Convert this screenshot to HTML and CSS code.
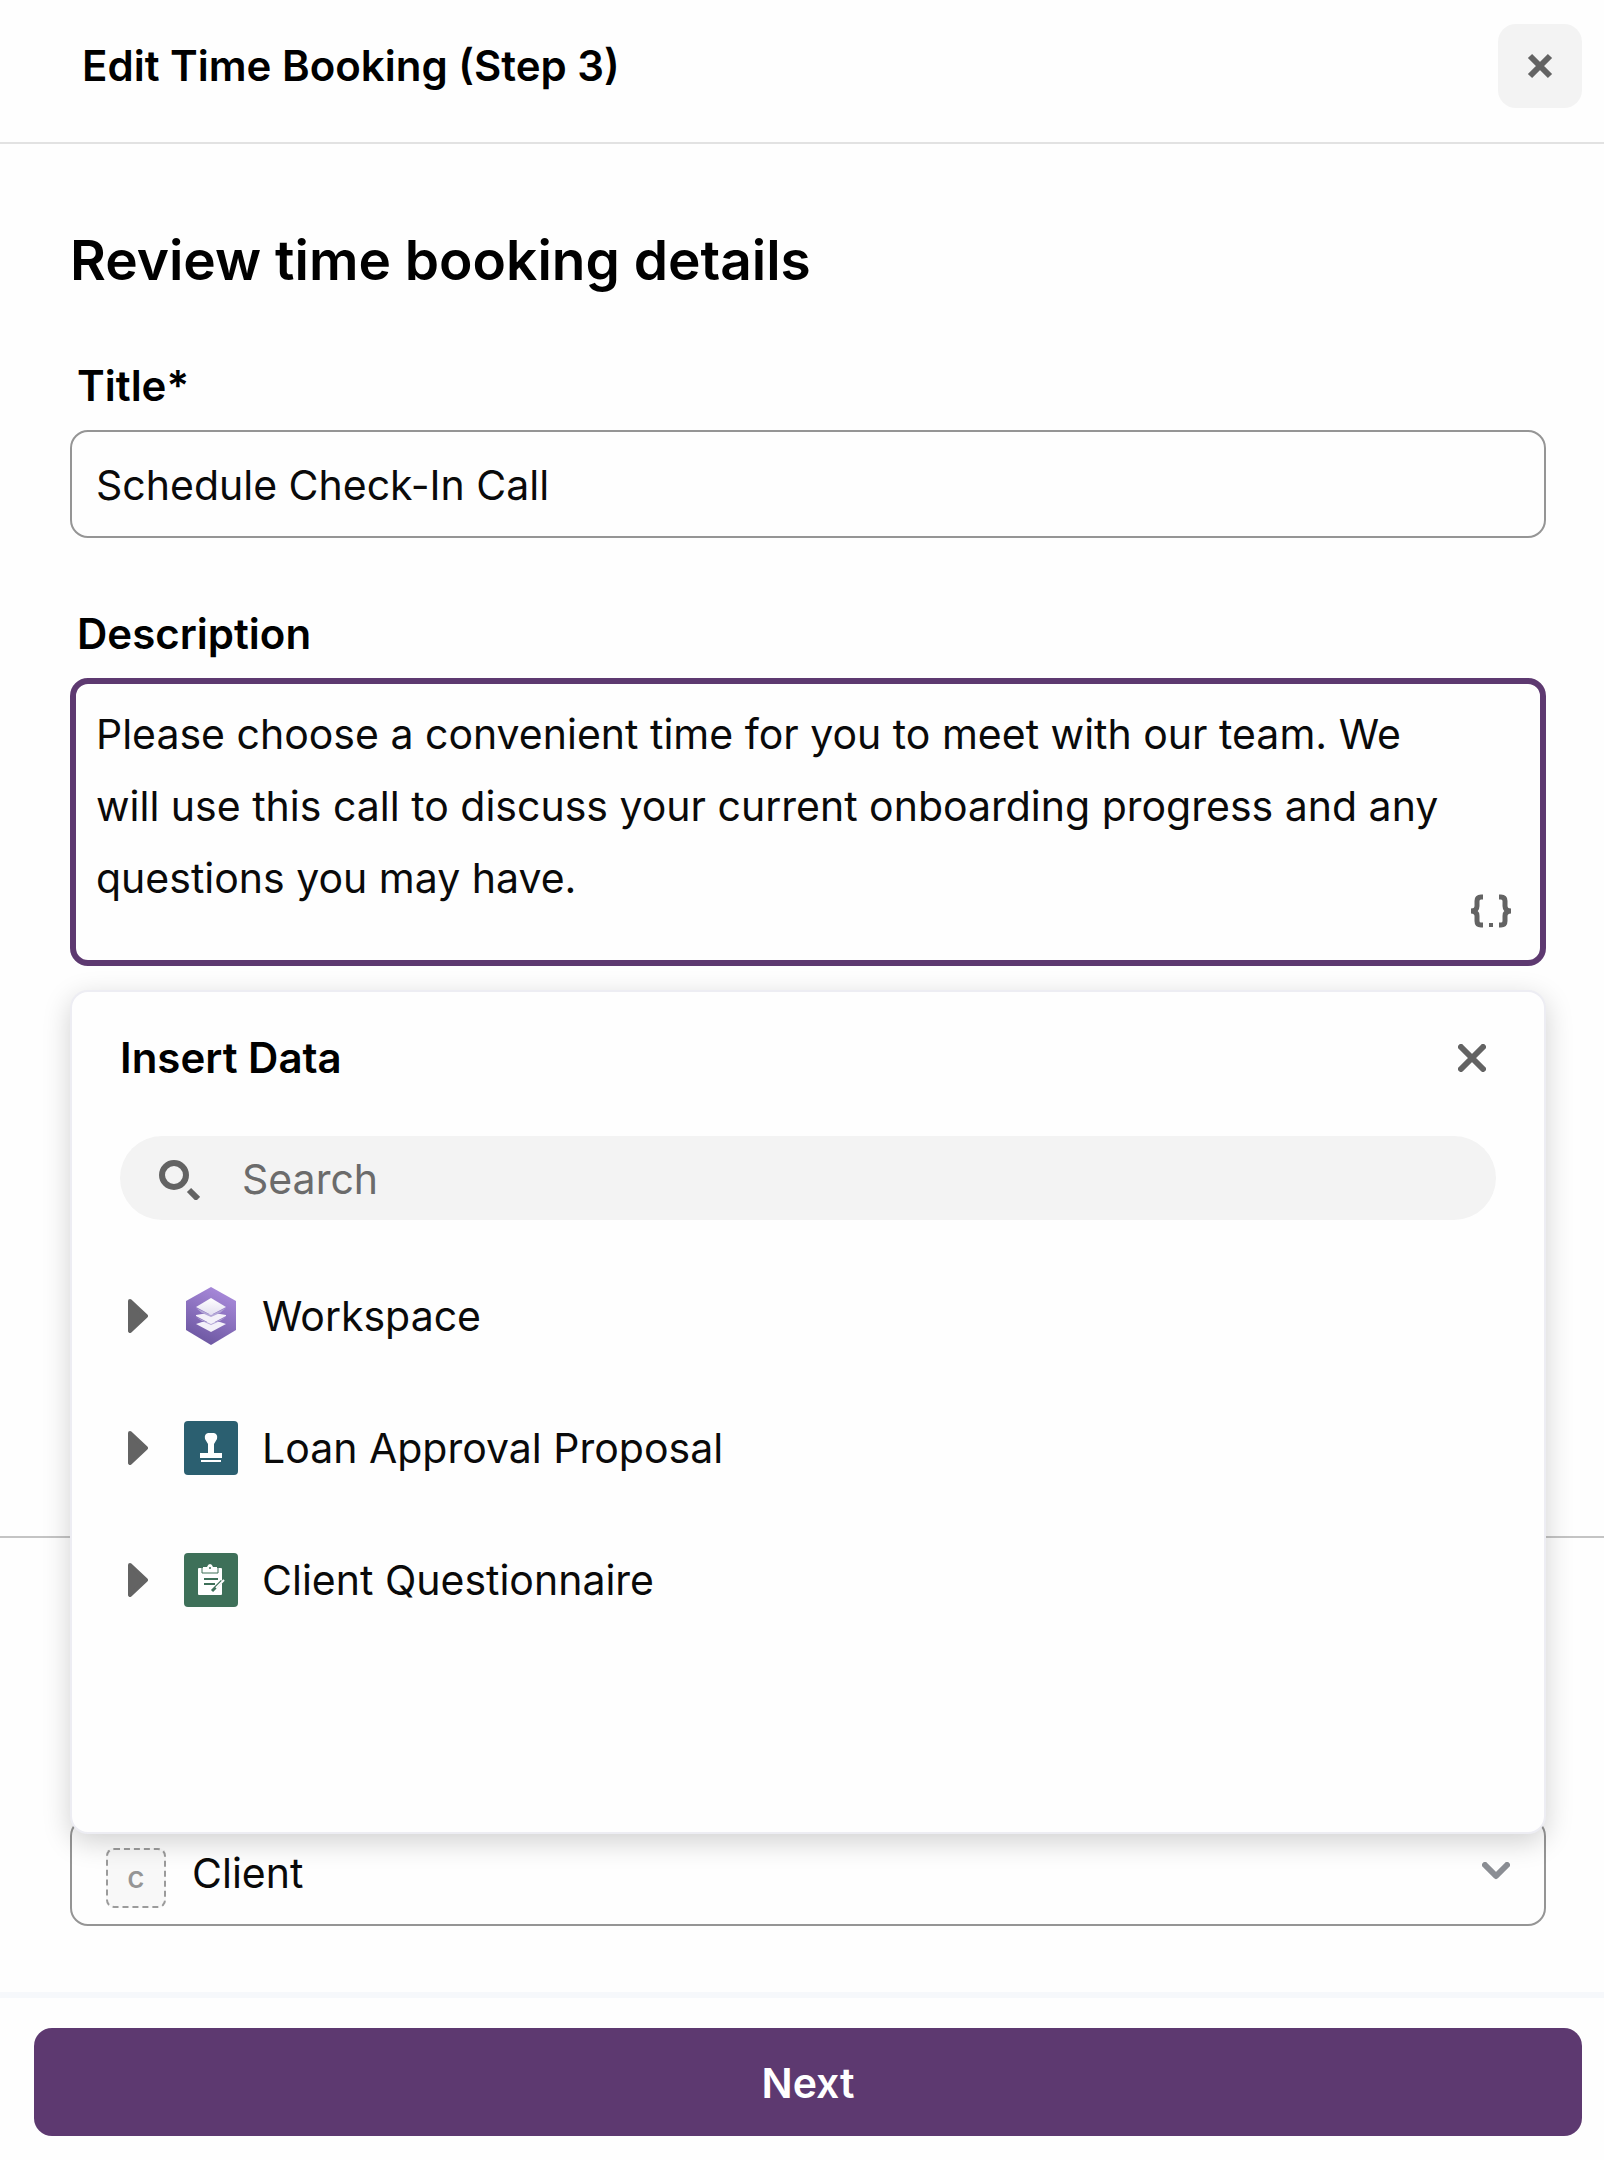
FILE: index.html
```html
<!DOCTYPE html>
<html lang="en">
<head>
<meta charset="utf-8">
<meta name="viewport" content="width=device-width, initial-scale=1">
<title>Edit Time Booking</title>
<link rel="stylesheet" href="styles.css">
</head>
<body>

  <header class="panel-header">
    <h1>Edit Time Booking (Step 3)</h1>
    <button type="button" class="close-btn" aria-label="Close">
      <svg width="26" height="26" viewBox="0 0 26 26"><path d="M3 3L23 23M23 3L3 23" stroke="#636363" stroke-width="6" fill="none"/></svg>
    </button>
  </header>

  <main>
    <section class="details">
      <h2>Review time booking details</h2>

      <div class="field">
        <label for="title">Title*</label>
        <input type="text" id="title" class="text-input" value="Schedule Check-In Call">
      </div>

      <div class="field">
        <label for="description">Description</label>
        <div class="textarea-wrap">
          <textarea id="description" rows="3">Please choose a convenient time for you to meet with our team. We will use this call to discuss your current onboarding progress and any questions you may have.</textarea>
          <button type="button" class="insert-btn" aria-label="Insert data">
            <svg width="42" height="34" viewBox="0 0 42 34" fill="none" stroke="#636363" stroke-width="4">
              <path d="M13 3H11Q7 3 7 7V12Q7 17 1 17Q7 17 7 22V27Q7 31 11 31H13" stroke-width="5"/>
              <path d="M29 3H31Q35 3 35 7V12Q35 17 41 17Q35 17 35 22V27Q35 31 31 31H29" stroke-width="5"/>
              <path d="M19 31H23"/>
            </svg>
          </button>

          <!-- Insert data menu, opens over the form -->
          <div class="popover">
            <div class="popover-header">
              <h3>Insert Data</h3>
              <button type="button" class="icon-btn" aria-label="Close insert data">
                <svg width="28" height="28" viewBox="0 0 28 28"><path d="M3 3L25 25M25 3L3 25" stroke="#636363" stroke-width="6" stroke-linecap="round" fill="none"/></svg>
              </button>
            </div>

            <div class="search">
              <svg width="42" height="42" viewBox="0 0 42 42" fill="none" stroke="#636363">
                <circle cx="16" cy="17" r="12" stroke-width="6"/>
                <path d="M31 32L40 41" stroke-width="6"/>
              </svg>
              <input type="search" placeholder="Search" aria-label="Search">
            </div>

            <ul class="sources">
              <li>
                <button type="button">
                  <svg class="arrow" viewBox="0 0 20 34"><path d="M2 2L18 17L2 32Z" fill="#636363" stroke="#636363" stroke-width="4" stroke-linejoin="round"/></svg>
                  <svg class="source-icon" viewBox="0 0 54 60">
                    <defs>
                      <linearGradient id="hex" x1="0.7" y1="0" x2="0.3" y2="1">
                        <stop offset="0" stop-color="#aa8bdc"/>
                        <stop offset="1" stop-color="#6a559f"/>
                      </linearGradient>
                      <linearGradient id="sheet" x1="0" y1="0" x2="0" y2="1">
                        <stop offset="0" stop-color="#ffffff"/>
                        <stop offset="1" stop-color="#e2def0"/>
                      </linearGradient>
                    </defs>
                    <path d="M27 1L52 15V44L27 59L2 44V15Z" fill="url(#hex)"/>
                    <path d="M12 38L18 36H36L42 38L27 46Z" fill="#f3f0f9"/>
                    <path d="M12 29L18 28H36L42 29V30L27 38L12 30Z" fill="#f3f0f9"/>
                    <path d="M12 31L27 38L42 31L36 35L27 39L18 35Z" fill="#b3a6d6"/>
                    <path d="M27 12L42 21L27 29L12 21Z" fill="url(#sheet)"/>
                    <path d="M12 22L27 29L42 22L36 27L27 31L18 27Z" fill="#b3a6d6"/>
                  </svg>
                  <span>Workspace</span>
                </button>
              </li>
              <li>
                <button type="button">
                  <svg class="arrow" viewBox="0 0 20 34"><path d="M2 2L18 17L2 32Z" fill="#636363" stroke="#636363" stroke-width="4" stroke-linejoin="round"/></svg>
                  <svg class="source-icon" viewBox="0 0 54 60">
                    <rect y="3" width="54" height="54" rx="4" fill="#2b5f70"/>
                    <path d="M24 15H30Q34 16 33 21L30 26V35H38V40H16V35H24V26L21 21Q20 16 24 15Z" fill="#fff"/>
                    <path d="M17 43H37" stroke="#fff" stroke-width="2"/>
                  </svg>
                  <span>Loan Approval Proposal</span>
                </button>
              </li>
              <li>
                <button type="button">
                  <svg class="arrow" viewBox="0 0 20 34"><path d="M2 2L18 17L2 32Z" fill="#636363" stroke="#636363" stroke-width="4" stroke-linejoin="round"/></svg>
                  <svg class="source-icon" viewBox="0 0 54 60">
                    <rect y="3" width="54" height="54" rx="4" fill="#3e7059"/>
                    <path d="M15 18H37Q38 18 38 19V44Q38 45 37 45H15Q14 45 14 44V19Q14 18 15 18Z" fill="#fff"/>
                    <path d="M18 18V23H34V18" fill="#fff" stroke="#3e7059"/>
                    <path d="M19 21V17H23Q24 14 26 14Q28 14 29 17H33V21Z" fill="#fff"/>
                    <circle cx="26" cy="18" r="1" fill="#3e7059"/>
                    <path d="M20 29H34M20 34H31" stroke="#3e7059" stroke-width="2"/>
                    <path d="M28 41L38 31" stroke="#3e7059" stroke-width="3"/>
                    <path d="M32 38L40 30" stroke="#fff" stroke-width="2"/>
                  </svg>
                  <span>Client Questionnaire</span>
                </button>
              </li>
            </ul>
          </div>
        </div>
      </div>
    </section>

    <section class="assignee">
      <div class="select-wrap">
        <select aria-label="Assignee">
          <option>Client</option>
        </select>
        <span class="avatar">c</span>
        <svg class="chevron" width="28" height="18" viewBox="0 0 28 18"><path d="M3 3L14 14L25 3" fill="none" stroke="#8b8e94" stroke-width="6" stroke-linecap="round" stroke-linejoin="round"/></svg>
      </div>
    </section>
  </main>

  <footer class="panel-footer">
    <button type="button" class="next-btn">Next</button>
  </footer>

</body>
</html>
```
FILE: styles.css
```css
* {
  box-sizing: border-box;
}

body {
  margin: 0;
  min-height: 100vh;
  display: flex;
  flex-direction: column;
  background: #fefefe;
  color: #0a0a0a;
  font-family: Inter, "Liberation Sans", sans-serif;
  font-size: 41px;
}

h1, h2, h3 {
  margin: 0;
  font-weight: 600;
  color: #000;
}

button {
  border: 0;
  padding: 0;
  background: none;
  font: inherit;
  color: inherit;
  cursor: pointer;
}

svg {
  display: block;
}

.panel-header {
  display: flex;
  align-items: center;
  justify-content: space-between;
  padding: 24px 22px 34px 82px;
  border-bottom: 2px solid #e2e2e2;
}

.panel-header h1 {
  font-size: 42px;
  line-height: 56px;
}

.close-btn {
  display: flex;
  align-items: center;
  justify-content: center;
  width: 84px;
  height: 84px;
  border-radius: 18px;
  background: #f3f3f3;
}

main {
  flex: 1;
}

.details {
  display: flex;
  flex-direction: column;
  padding: 80px 58px 570px 70px;
  border-bottom: 2px solid #c4c4c4;
}

h2 {
  font-size: 55px;
  line-height: 72px;
  margin-bottom: 62px;
}

.field + .field {
  margin-top: 68px;
}

.field label {
  display: block;
  padding-left: 7px;
  margin-bottom: 16px;
  font-size: 42px;
  line-height: 56px;
  font-weight: 600;
  color: #000;
}

.text-input,
textarea,
select {
  display: block;
  width: 100%;
  border: 2px solid #959595;
  border-radius: 18px;
  background: #fefefe;
  font: inherit;
  color: inherit;
  outline: none;
}

.text-input {
  height: 108px;
  padding: 2px 24px 0;
}

.textarea-wrap {
  position: relative;
}

textarea {
  height: 288px;
  padding: 14px 90px 12px 20px;
  border: 6px solid #5d3970;
  line-height: 72px;
  resize: none;
  overflow: hidden;
}

.insert-btn {
  position: absolute;
  right: 34px;
  bottom: 38px;
}

/* Insert Data popover */
.popover {
  position: absolute;
  top: calc(100% + 24px);
  left: 0;
  right: 0;
  z-index: 2;
  min-height: 844px;
  padding: 34px 48px;
  border: 2px solid #ededf3;
  border-radius: 18px;
  background: #fefefe;
  box-shadow: 0 8px 28px rgba(0, 0, 0, 0.18);
}

.popover-header {
  display: flex;
  align-items: center;
  justify-content: space-between;
}

.popover-header h3 {
  font-size: 42px;
  line-height: 64px;
}

.icon-btn {
  margin-right: 10px;
}

.search {
  display: flex;
  align-items: center;
  gap: 42px;
  height: 84px;
  margin: 46px 0 30px;
  padding: 2px 38px 0;
  border-radius: 42px;
  background: #f3f3f3;
}

.search input {
  flex: 1;
  min-width: 0;
  padding: 0;
  border: 0;
  background: none;
  font: inherit;
  outline: none;
}

.search input::placeholder {
  color: #6b6b6b;
  opacity: 1;
}

.sources {
  list-style: none;
  margin: 0;
  padding: 0;
}

.sources button {
  display: flex;
  align-items: center;
  width: 100%;
  height: 132px;
  padding-left: 8px;
  text-align: left;
}

.arrow {
  width: 20px;
  height: 34px;
  margin-right: 36px;
}

.source-icon {
  width: 54px;
  height: 60px;
  margin-right: 24px;
}

/* Assignee */
.assignee {
  padding: 280px 58px 66px 70px;
}

.select-wrap {
  position: relative;
}

select {
  appearance: none;
  height: 108px;
  padding: 2px 100px 0 120px;
}

.avatar {
  position: absolute;
  left: 36px;
  top: 30px;
  width: 60px;
  height: 60px;
  border: 2px dashed #9b9b9b;
  border-radius: 8px;
  background: #f8f8f8;
  color: #959595;
  font-size: 30px;
  font-weight: 500;
  line-height: 54px;
  text-align: center;
  pointer-events: none;
}

.chevron {
  position: absolute;
  right: 36px;
  top: 44px;
  pointer-events: none;
}

.panel-footer {
  padding: 30px 22px 24px 34px;
  border-top: 6px solid #f6f8fb;
}

.next-btn {
  display: block;
  width: 100%;
  height: 108px;
  padding-top: 2px;
  border-radius: 18px;
  background: #5d3970;
  color: #fff;
  font-weight: 600;
}
```
